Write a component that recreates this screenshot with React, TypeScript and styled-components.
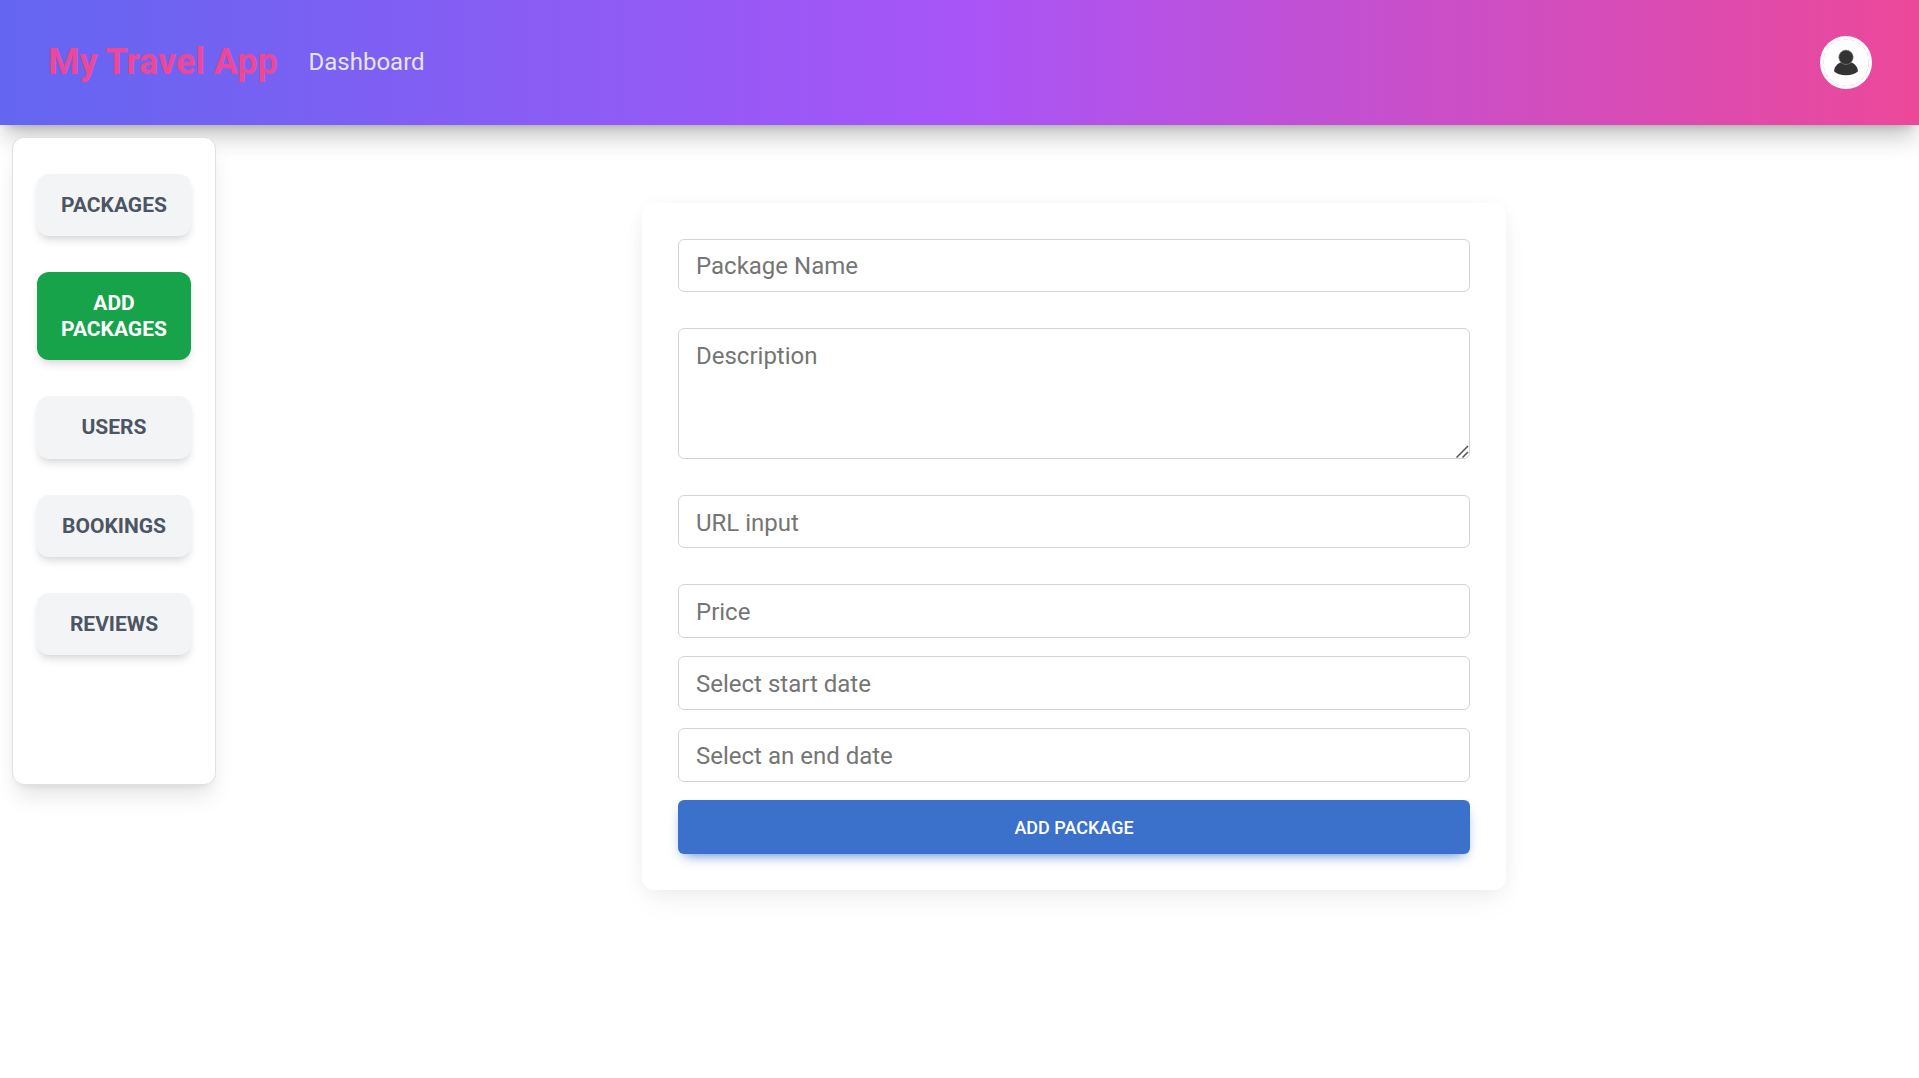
import React from "react";
import styled, { createGlobalStyle } from "styled-components";

const Global = createGlobalStyle`
  *, *::before, *::after { box-sizing: border-box; }
  html, body { margin: 0; padding: 0; background: #fff; }
  body { font-family: Roboto, "Liberation Sans", sans-serif; font-size: 24px; line-height: 36px; overflow: hidden; }
  button, input, textarea { font-family: inherit; }
`;

const Page = styled.div`
  height: 1078px;
  display: flex;
  flex-direction: column;
`;

const Header = styled.header`
  flex: none;
  height: 125px;
  padding: 0 47px 0 48px;
  display: flex;
  align-items: center;
  background: linear-gradient(to right, #6366f1, #a855f7, #ec4899);
  box-shadow: 0 15px 22.5px -4.5px rgba(0, 0, 0, 0.24), 0 6px 9px -6px rgba(0, 0, 0, 0.2);
`;

const Brand = styled.span`
  margin-bottom: 2px;
  font-size: 36px;
  font-weight: 700;
  line-height: 48px;
  letter-spacing: -0.05px;
  color: #ec4899;
  white-space: nowrap;
`;

const NavLink = styled.a`
  margin: 0 0 2px 30.8px;
  color: #e5e5e5;
`;

const Avatar = styled.div`
  margin-left: auto;
  width: 52px;
  height: 53px;
  svg { display: block; }
`;

const Body = styled.div`
  flex: 1;
  display: flex;
  align-items: flex-start;
`;

const Sidebar = styled.nav`
  flex: none;
  width: 204px;
  height: 648px;
  margin: 12px 0 0 12px;
  padding: 36px 24px;
  display: flex;
  flex-direction: column;
  gap: 36px;
  background: #fff;
  border: 1px solid #dfe1e5;
  border-radius: 12px;
  box-shadow: 0 15px 22.5px -4.5px rgba(0, 0, 0, 0.1), 0 6px 9px -6px rgba(0, 0, 0, 0.1);
`;

const SideButton = styled.button<{ $active?: boolean }>`
  border: 0;
  padding: 18px;
  border-radius: 12px;
  font-size: 21px;
  font-weight: 700;
  line-height: ${(p) => (p.$active ? 26 : 26.25)}px;
  text-align: center;
  color: ${(p) => (p.$active ? "#fff" : "#4b5563")};
  background: ${(p) => (p.$active ? "#16a34a" : "#f3f4f6")};
  box-shadow: 0 6px 9px -1.5px rgba(0, 0, 0, 0.1), 0 3px 6px -3px rgba(0, 0, 0, 0.1);
`;

const Main = styled.main`
  flex: 1;
  display: flex;
  justify-content: center;
  padding: 78px 0 0 13px;
`;

const Card = styled.form`
  width: 864px;
  height: 687px;
  padding: 36px;
  display: flex;
  flex-direction: column;
  background: #fff;
  border-radius: 12px;
  box-shadow: 0 3px 22.5px -4.5px rgba(0, 0, 0, 0.07), 0 15px 30px -3px rgba(0, 0, 0, 0.04);
`;

const Input = styled.input<{ $h: number; $gap: number; $drop?: number }>`
  flex: none;
  width: 100%;
  height: ${(p) => p.$h}px;
  margin: 0 0 ${(p) => p.$gap}px;
  padding: ${(p) => p.$drop ?? 0}px 17px 0;
  border: 1px solid #d4d4d4;
  border-radius: 6px;
  background: transparent;
  font-size: 24px;
  outline: none;
  &::placeholder { color: #757575; opacity: 1; }
`;

const AreaWrap = styled.div`
  flex: none;
  position: relative;
  height: 131px;
  margin-bottom: 36px;
  svg { position: absolute; right: 1px; bottom: 1px; }
`;

const Area = styled.textarea`
  display: block;
  width: 100%;
  height: 100%;
  padding: 8px 17px 6px;
  border: 1px solid #d4d4d4;
  border-radius: 6px;
  background: transparent;
  font-size: 24px;
  line-height: 38.4px;
  resize: none;
  outline: none;
  overflow: hidden;
  &::placeholder { color: #757575; opacity: 1; }
`;

const Submit = styled.button`
  flex: none;
  height: 54px;
  border: 0;
  border-radius: 6px;
  background: #3b71ca;
  color: #fff;
  font-size: 18px;
  font-weight: 500;
  line-height: 27px;
  box-shadow: 0 6px 13.5px -6px #3b71ca;
`;

const links = ["PACKAGES", "ADD PACKAGES", "USERS", "BOOKINGS", "REVIEWS"];

export default function App() {
  return (
    <Page>
      <Global />
      <Header>
        <Brand>My Travel App</Brand>
        <NavLink>Dashboard</NavLink>
        <Avatar>
          <svg width="52" height="53" viewBox="0 0 52 53">
            <ellipse cx="26" cy="26.5" rx="26" ry="26.5" fill="#fff" />
            <ellipse cx="26" cy="26.5" rx="22.8" ry="23.3" fill="none" stroke="#f7c4dd" strokeWidth="0.6" strokeDasharray="5 2" />
            <path d="M14 35.2C14.500 29.500 19 25.500 26 25.500s11.500 4 12 9.700C35.500 38 31 39.200 26 39.200s-9.500-1.200-12-4Z" fill="#333" />
            <circle cx="26" cy="21.300" r="7.200" fill="#333" stroke="#8a8a8a" strokeWidth="0.600" />
          </svg>
        </Avatar>
      </Header>
      <Body>
        <Sidebar>
          {links.map((label) => (
            <SideButton key={label} type="button" $active={label === "ADD PACKAGES"}>
              {label}
            </SideButton>
          ))}
        </Sidebar>
        <Main>
          <Card>
            <Input placeholder="Package Name" $h={53} $gap={36} />
            <AreaWrap>
              <Area placeholder="Description" />
              <svg width="13" height="13" viewBox="0 0 13 13">
                <path d="M0.500 12.500 12 1M6.500 12.500 12 7" stroke="#555" strokeWidth="1.500" fill="none" />
              </svg>
            </AreaWrap>
            <Input placeholder="URL input" $h={53} $gap={36} $drop={2} />
            <Input placeholder="Price" $h={54} $gap={18} $drop={2} />
            <Input placeholder="Select start date" $h={54} $gap={18} $drop={2} />
            <Input placeholder="Select an end date" $h={54} $gap={18} $drop={2} />
            <Submit type="button">ADD PACKAGE</Submit>
          </Card>
        </Main>
      </Body>
    </Page>
  );
}
